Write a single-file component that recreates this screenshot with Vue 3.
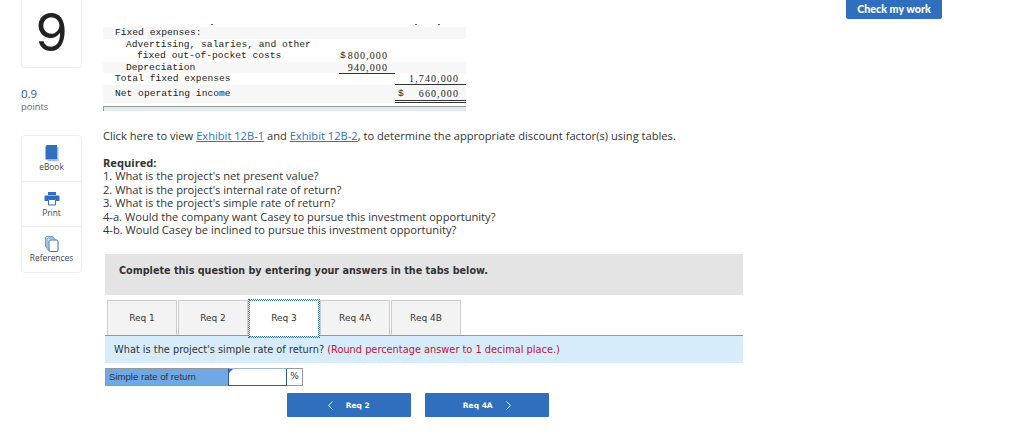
<template>
  <div class="page">
    <aside class="sidebar">
      <div class="number-card">9</div>
      <div class="score">
        <div class="score-value">0.9</div>
        <div class="score-label">points</div>
      </div>
      <div class="tools">
        <div class="tool">
          <svg viewBox="0 0 16 16">
            <path d="M13 1.5h1.5V16H3.5v-1H13z" fill="#9dbde6" />
            <path d="M1.5 2a2 2 0 0 1 2-2H13v14.5H1.5z" fill="#2f6fbd" />
          </svg>
          <span>eBook</span>
        </div>
        <div class="tool">
          <svg viewBox="0 0 16 16">
            <path d="M4 1h8v3H4z" fill="#2f6fbd" />
            <path d="M1.5 4.5h13a1 1 0 0 1 1 1V10H12V8H4v2H.5V5.5a1 1 0 0 1 1-1z" fill="#2f6fbd" />
            <path d="M4.5 8.5h7v5.5h-7z" fill="#fff" stroke="#2f6fbd" />
          </svg>
          <span>Print</span>
        </div>
        <div class="tool">
          <svg viewBox="0 0 16 16">
            <rect x="1.5" y="0.5" width="8" height="11" rx="1.5" fill="#dbe7f6" stroke="#6b9bd6" />
            <rect x="3" y="2" width="8" height="12" rx="1.5" fill="#dbe7f6" stroke="#6b9bd6" />
            <rect x="5" y="4" width="9" height="11.5" rx="1.5" fill="#fff" stroke="#2f6fbd" />
          </svg>
          <span>References</span>
        </div>
      </div>
    </aside>

    <main class="content">
      <div class="exhibit">
        <!-- 上一行被裁掉后留下的小点 -->
        <div class="clipped-row">
          <i class="tick"></i><i class="tick"></i><i class="tick"></i>
        </div>
        <div v-for="row in rows" :key="row.label" class="exhibit-row" :class="row.cls">
          <span class="col-label" :style="{ paddingLeft: `${row.indent * 11}px` }">{{ row.label }}</span>
          <span class="col-a" :class="{ underline: row.aLine }">
            <span v-if="row.aSign">$</span>
            <span class="num">{{ row.a }}</span>
          </span>
          <span class="col-b" :class="row.bCls">
            <span v-if="row.bSign">$</span>
            <span class="num">{{ row.b }}</span>
          </span>
        </div>
        <div class="exhibit-cut"></div>
      </div>

      <p class="exhibit-link">
        Click here to view <a>Exhibit 12B-1</a> and <a>Exhibit 12B-2</a>, to determine the appropriate discount factor(s) using tables.
      </p>

      <div class="required">
        <strong>Required:</strong>
        <div v-for="item in questions" :key="item">{{ item }}</div>
      </div>

      <div class="panel">Complete this question by entering your answers in the tabs below.</div>

      <div class="tabs">
        <div v-for="tab in tabs" :key="tab" class="tab" :class="{ active: tab === 'Req 3' }">{{ tab }}</div>
      </div>

      <div class="prompt">
        What is the project's simple rate of return? <span class="hint">(Round percentage answer to 1 decimal place.)</span>
      </div>

      <div class="answer">
        <div class="answer-label">Simple rate of return</div>
        <div class="answer-input"></div>
        <div class="answer-unit">%</div>
      </div>

      <div class="nav">
        <button class="nav-btn">
          <svg class="chev" width="5" height="9" viewBox="0 0 5 9"><path d="M4.5.5l-4 4 4 4" /></svg>
          <span>Req 2</span>
        </button>
        <button class="nav-btn">
          <span>Req 4A</span>
          <svg class="chev" width="5" height="9" viewBox="0 0 5 9"><path d="M.5.5l4 4-4 4" /></svg>
        </button>
      </div>
    </main>

    <button class="check-btn">Check my work</button>
  </div>
</template>

<script setup>
const rows = [
  { label: 'Fixed expenses:', indent: 0, a: '', b: '', cls: 'shade' },
  { label: 'Advertising, salaries, and other', indent: 1, a: '', b: '' },
  { label: 'fixed out-of-pocket costs', indent: 2, a: '800,000', aSign: true, b: '' },
  { label: 'Depreciation', indent: 1, a: '940,000', b: '', cls: 'shade', aLine: true },
  { label: 'Total fixed expenses', indent: 0, a: '', b: '1,740,000', bCls: 'single' },
  { label: 'Net operating income', indent: 0, a: '', b: '660,000', bSign: true, cls: 'shade tall', bCls: 'double' }
]

const questions = [
  "1. What is the project's net present value?",
  "2. What is the project's internal rate of return?",
  "3. What is the project's simple rate of return?",
  '4-a. Would the company want Casey to pursue this investment opportunity?',
  '4-b. Would Casey be inclined to pursue this investment opportunity?'
]

const tabs = ['Req 1', 'Req 2', 'Req 3', 'Req 4A', 'Req 4B']
</script>

<style>
html, body {
  margin: 0;
  background: #fff;
}
</style>

<style scoped>
.page {
  position: relative;
  display: flex;
  height: 445px;
  overflow: hidden;
  font-family: "Open Sans", "Liberation Sans", sans-serif;
  color: #333;
}

.sidebar {
  width: 61px;
  margin-left: 21px;
  flex-shrink: 0;
}

.number-card {
  box-sizing: border-box;
  height: 68px;
  border: 1px solid #eee;
  border-top: none;
  border-radius: 0 0 4px 4px;
  text-align: center;
  font-family: "Inter", sans-serif;
  font-size: 52px;
  line-height: 66px;
  color: #222;
}

.score {
  margin-top: 19px;
  font-size: 9.4px;
  line-height: 13px;
}

.score-value {
  font-size: 11.5px;
  color: #2b5c9e;
}

.score-label {
  color: #666;
}

.tools {
  margin-top: 22px;
  padding-bottom: 1px;
  border: 1px solid #eee;
  border-radius: 4px;
}

.tool {
  box-sizing: border-box;
  height: 45px;
  padding-top: 9px;
  display: flex;
  flex-direction: column;
  align-items: center;
  font-size: 8.4px;
  line-height: 11px;
  color: #444;
}

.tool + .tool {
  border-top: 1px solid #eee;
}

.tool svg {
  display: block;
  width: 16px;
  height: 16px;
}

.content {
  margin-left: 21px;
  width: 640px;
}

.exhibit {
  width: 363px;
  margin-top: 23px;
  font-family: "Liberation Mono", monospace;
  font-size: 9.65px;
  color: #222;
}

.clipped-row {
  display: flex;
  height: 4px;
  padding: 1px 0 0 108px;
  box-sizing: border-box;
}

.tick {
  width: 2px;
  height: 1px;
  background: #666;
}

.tick + .tick {
  margin-left: 202px;
}

.tick + .tick + .tick {
  margin-left: 21px;
}

.exhibit-row {
  display: flex;
  height: 11.5px;
  line-height: 11.5px;
}

.exhibit-row.shade {
  background: #f7f7f7;
}

.exhibit-row.tall {
  height: 18px;
  line-height: 18px;
}

.col-label {
  box-sizing: border-box;
  width: 224px;
  margin-left: 12px;
  white-space: pre;
}

.col-a,
.col-b {
  display: flex;
  box-sizing: border-box;
  padding-right: 7px;
}

.col-a {
  width: 56px;
  padding-left: 1px;
}

.col-a.underline {
  box-shadow: 0 1px 0 #333;
}

.col-b {
  width: 71px;
  padding-left: 3px;
}

/* Liberation Mono 的 0 带点，数字改用衬线字体加字距 */
.num {
  margin-left: auto;
  font-family: "Liberation Serif", serif;
  font-size: 10px;
  letter-spacing: 1.1px;
}

.col-b.single {
  border-bottom: 1px solid #333;
}

.col-b.double {
  border-bottom: 3px double #333;
}

.exhibit-cut {
  height: 4px;
  margin-top: 3px;
  background: #e4e8ef;
  border-top: 1px solid #999;
  border-left: 1px solid #999;
}

.exhibit-link {
  margin: 18px 0 0;
  font-size: 11.13px;
  line-height: 14px;
}

.exhibit-link a {
  color: #2d72c4;
  text-decoration: underline;
}

.required {
  margin-top: 13px;
  font-size: 11.13px;
  line-height: 13.6px;
}

.panel {
  margin: 17px 0 0 2px;
  height: 41px;
  padding-left: 14px;
  background: #e4e4e4;
  font-family: "DejaVu Sans", sans-serif;
  font-size: 9.65px;
  font-weight: 700;
  line-height: 34px;
}

.tabs {
  display: flex;
  gap: 1px;
  height: 35px;
  margin: 5px 0 0 2px;
  padding-left: 2px;
  border-bottom: 1px solid #999;
  font-family: "DejaVu Sans", sans-serif;
  font-size: 9px;
}

.tab {
  box-sizing: border-box;
  width: 70px;
  height: 35px;
  background: #f3f3f3;
  border: 1px solid #ccc;
  border-bottom: none;
  text-align: center;
  line-height: 34px;
}

.tab.active {
  height: 37px;
  background: #fff;
  border: 1px dotted #2f6fbd;
  outline: 1px dotted #2f6fbd;
}

.prompt {
  height: 27px;
  margin-left: 2px;
  padding-left: 9px;
  background: #d6ecfb;
  font-family: "DejaVu Sans", sans-serif;
  font-size: 9.8px;
  line-height: 27px;
}

.hint {
  color: #c8102e;
}

.answer {
  display: flex;
  height: 18px;
  margin: 5px 0 0 2px;
  font-family: "Liberation Sans", sans-serif;
  font-size: 9.6px;
  line-height: 15px;
}

.answer-label {
  box-sizing: border-box;
  width: 123px;
  padding-left: 3px;
  background: #6fa8e6;
  border: 1px solid #999;
  border-right: none;
}

.answer-input {
  position: relative;
  box-sizing: border-box;
  width: 59px;
  border: 1px solid #2b5c9e;
  border-top-color: #9db8d8;
}

.answer-input::before {
  content: "";
  position: absolute;
  top: 0;
  left: 0;
  border-top: 4px solid #2f6fbd;
  border-right: 4px solid transparent;
}

.answer-unit {
  box-sizing: border-box;
  width: 16px;
  border: 1px solid #999;
  border-left: none;
  text-align: center;
  font-family: "DejaVu Sans", sans-serif;
  font-size: 9px;
}

.nav {
  display: flex;
  gap: 14.5px;
  margin-top: 7px;
  padding-left: 184px;
}

.nav-btn {
  display: flex;
  align-items: center;
  justify-content: center;
  gap: 13px;
  width: 123.5px;
  height: 24px;
  padding: 0;
  border: none;
  border-radius: 1px;
  background: #2f6fbd;
  color: #fff;
  font-family: "DejaVu Sans", sans-serif;
  font-size: 7.5px;
  font-weight: 700;
}

.chev path {
  fill: none;
  stroke: #fff;
}

.check-btn {
  position: absolute;
  top: -2px;
  left: 846px;
  width: 96px;
  height: 20.5px;
  padding: 0;
  border: none;
  border-radius: 2px;
  background: #2f6fbd;
  color: #fff;
  font-family: "Lato", sans-serif;
  font-size: 10.7px;
  font-weight: 900;
}
</style>
